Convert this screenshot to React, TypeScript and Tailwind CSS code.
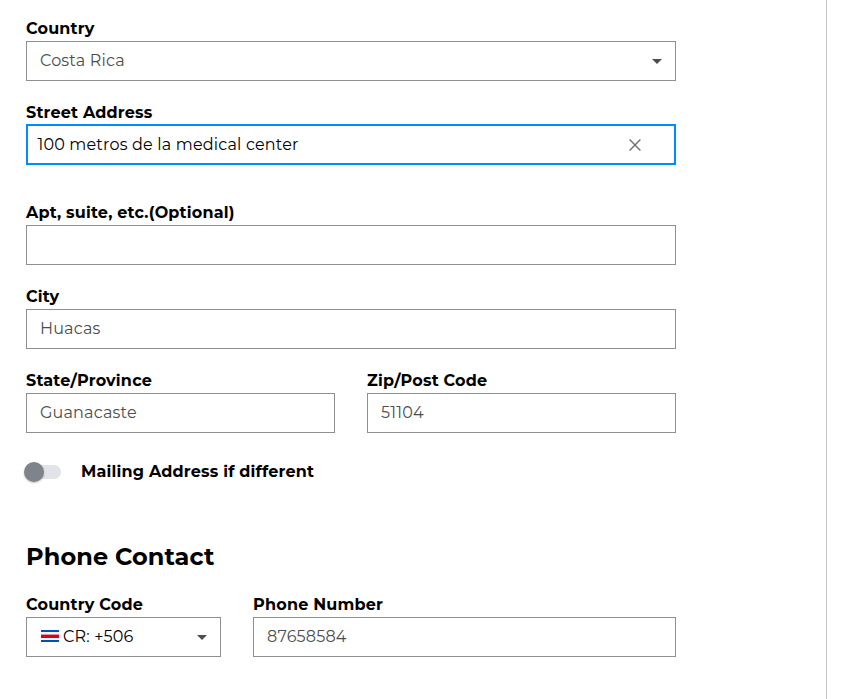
import type { ReactNode } from "react";

function Label({ children, className = "" }: { children: ReactNode; className?: string }) {
  return (
    <label className={`block h-6 whitespace-nowrap text-[16px] font-bold leading-6 tracking-[0.19px] text-black ${className}`}>
      {children}
    </label>
  );
}

function Box({ children, className = "" }: { children?: ReactNode; className?: string }) {
  return (
    <div className={`flex h-10 items-center whitespace-nowrap border border-[#8f8f8f] pl-[13px] text-[16px] tracking-[0.18px] text-[#4d4d4d] ${className}`}>
      {children}
    </div>
  );
}

function Caret() {
  return (
    <svg className="mt-px ml-auto" width="10" height="5" viewBox="0 0 10 5" fill="#4d4d4d">
      <path d="M0 0h10L5 5z" />
    </svg>
  );
}

function Flag() {
  return (
    <svg className="-mt-0.5" width="18" height="12" viewBox="0 0 18 12" shapeRendering="crispEdges">
      <path fill="#f4f4f8" d="M0 0h18v12H0z" />
      <path fill="#0052b4" d="M0 0h18v2H0zM0 10h18v2H0z" />
      <path fill="#e88fa5" d="M0 4h18v4H0z" />
      <path fill="#d80027" d="M0 5h18v3H0z" />
    </svg>
  );
}

export default function App() {
  return (
    <div className="flex h-[699px] w-[846px] overflow-hidden bg-white font-['Montserrat','Inter',sans-serif]">
      <main className="w-[827px] border-r border-[#c4c4c4] pl-[26px] pt-[17px]">
        <form className="w-[650px]">
          <Label><span>Country</span></Label>
          <Box className="pr-[13px]"><span>Costa Rica</span><Caret /></Box>

          <Label className="mt-5 h-[23px]"><span>Street Address</span></Label>
          <div className="flex h-[41px] items-center border-2 border-[#008cff] pl-[9.5px] pr-[33px] text-[16px] tracking-[0.18px] text-black">
            <span>100 metros de la medical center</span>
            <svg className="mt-px ml-auto" width="12" height="12" viewBox="0 0 12 12" stroke="#707070" strokeWidth="1.4">
              <path d="M.6.6l10.8 10.8M11.4.6L.6 11.4" />
            </svg>
          </div>

          <Label className="mt-9"><span>Apt, suite, etc.(Optional)</span></Label>
          <Box />

          <Label className="mt-5"><span>City</span></Label>
          <Box><span>Huacas</span></Box>

          <div className="mt-5 grid grid-cols-2 gap-8">
            <div>
              <Label><span>State/Province</span></Label>
              <Box><span>Guanacaste</span></Box>
            </div>
            <div>
              <Label><span>Zip/Post Code</span></Label>
              <Box><span>51104</span></Box>
            </div>
          </div>

          <div className="mt-[27px] flex h-6 items-center">
            <div className="-ml-0.5 flex h-6 w-[57px] items-center">
              <div className="z-10 size-5 rounded-full bg-[#7e838c] shadow-[0_1px_2px_rgba(0,0,0,0.25)]" />
              <div className="-ml-2.5 h-3.5 w-[27px] rounded-r-full bg-[#e2e3e8]" />
            </div>
            <Label><span>Mailing Address if different</span></Label>
          </div>

          <h2 className="mt-[57px] h-8 whitespace-nowrap text-[24px] font-bold leading-8 tracking-[0.08px] text-black"><span>Phone Contact</span></h2>

          <div className="mt-5 flex gap-8">
            <div className="w-[195px]">
              <Label><span>Country Code</span></Label>
              <Box className="pl-[14px] pr-[13px] text-black!">
                <Flag />
                <span className="ml-1">CR: +506</span>
                <Caret />
              </Box>
            </div>
            <div className="flex-1">
              <Label><span>Phone Number</span></Label>
              <Box><span>87658584</span></Box>
            </div>
          </div>
        </form>
      </main>
    </div>
  );
}
